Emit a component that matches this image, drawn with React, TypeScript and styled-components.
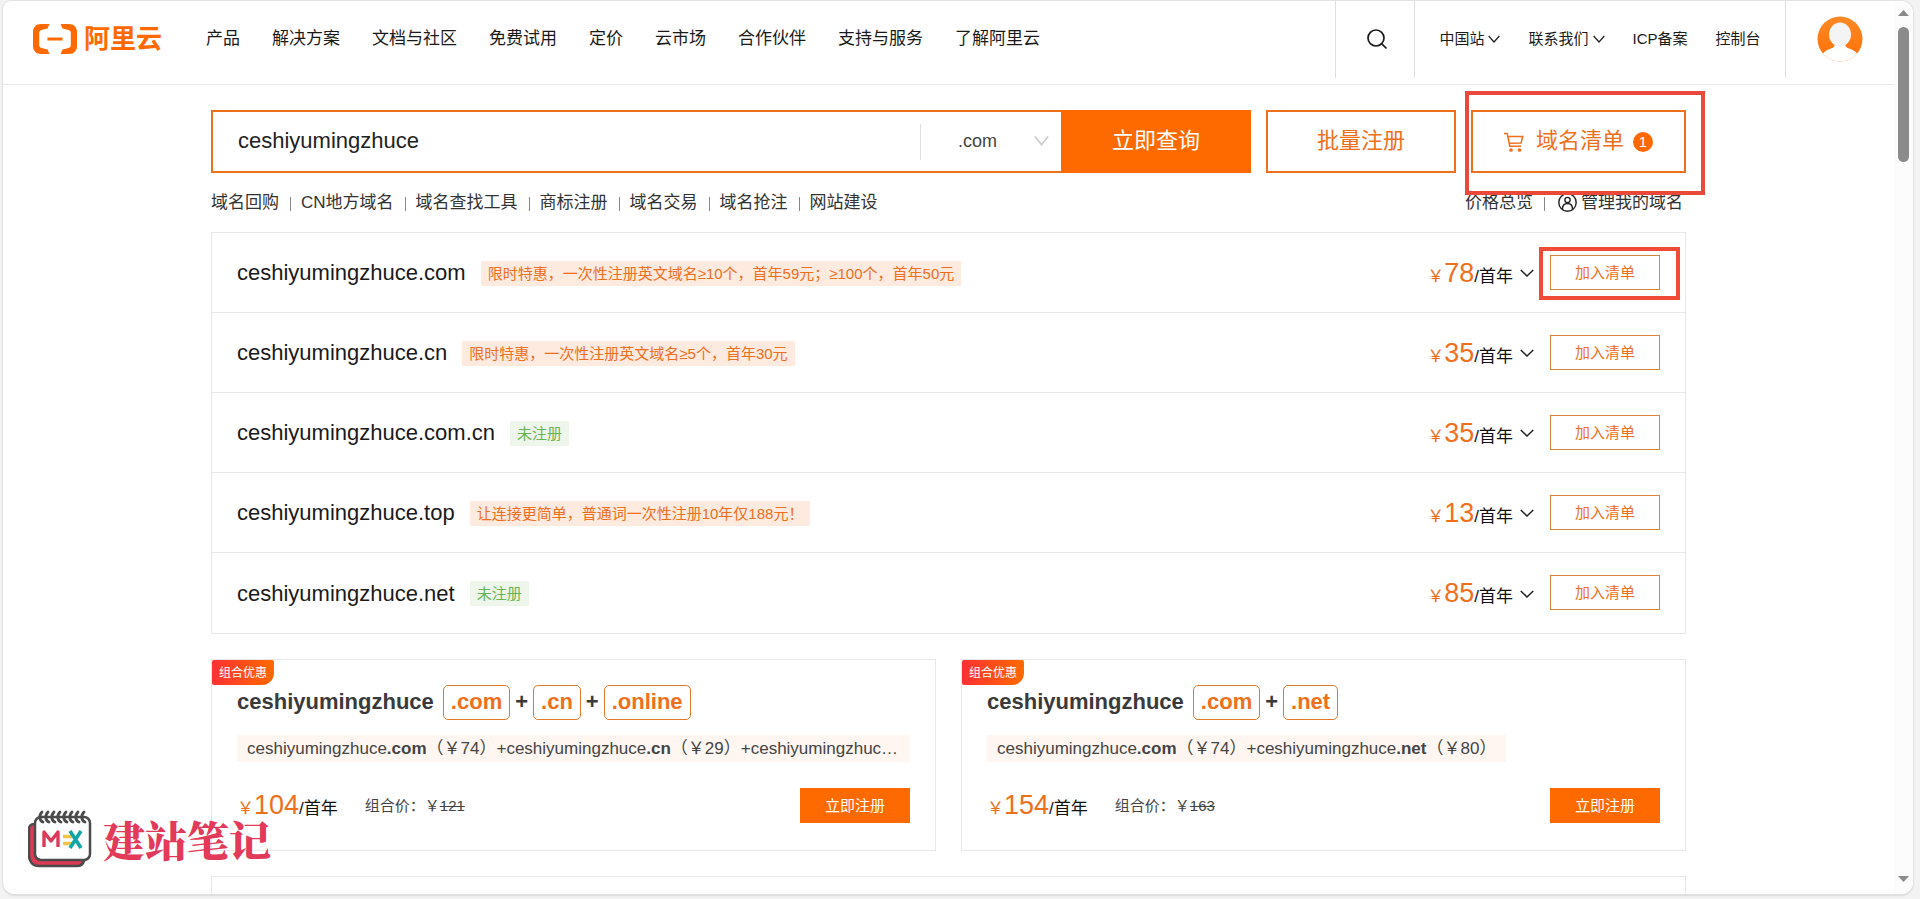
import React from 'react';
import styled, { createGlobalStyle } from 'styled-components';

const ORANGE = '#ff6a00';
const TEXT_ORANGE = '#ee6f1c';
const LINE = '#e8e8e8';

const GlobalStyle = createGlobalStyle`
  * { box-sizing: border-box; }
  body {
    margin: 0;
    background: #f3f3f3;
    color: #1a1a1a;
    font-family: "Liberation Sans", "Noto Sans CJK SC", sans-serif;
    font-size: 17px;
    line-height: 24px;
  }
  a { color: inherit; text-decoration: none; }
  button, input, select { font-family: inherit; margin: 0; }
  button { cursor: pointer; }
  svg { display: block; flex: none; }
`;

const Desktop = styled.div`
  height: 100vh;
  padding: 1px 7px 5px 3px;
  overflow: hidden;
  position: relative;
`;

const Window = styled.div`
  height: 100%;
  display: flex;
  overflow: hidden;
  background: #fff;
  border-radius: 8px 12px 12px 12px;
  box-shadow: 0 0 1px 1px #e2e2e2, 0 2px 2px #d8d8d8;
`;

const Page = styled.div`
  flex: 1;
  min-width: 0;
`;

const Scrollbar = styled.div`
  width: 19px;
  padding: 9px 4px 12px;
  display: flex;
  flex-direction: column;
  align-items: center;
  background: #fcfcfc;
`;

const Thumb = styled.div`
  width: 11px;
  height: 135px;
  margin: 11px 0 auto;
  border-radius: 6px;
  background: #8b8b8b;
`;

const Header = styled.header`
  height: 84px;
  padding-left: 29px;
  display: flex;
  align-items: flex-start;
  border-bottom: 1px solid ${LINE};
`;

const Logo = styled.a`
  display: flex;
  align-items: center;
  gap: 6px;
  height: 75px;
  width: 174px;
  color: ${ORANGE};
  font-size: 26px;
  font-weight: 700;
  white-space: nowrap;
`;

const Nav = styled.nav`
  flex: 1;
  display: flex;
  align-items: center;
  gap: 32px;
  height: 75px;
  white-space: nowrap;
`;

const HeaderCell = styled.div<{ $width: number }>`
  width: ${p => p.$width}px;
  height: 77px;
  padding-bottom: 2px;
  display: flex;
  align-items: center;
  justify-content: center;
  border-left: 1px solid #dedede;
`;

const IconButton = styled.button`
  padding: 0;
  border: 0;
  background: none;
  color: #1a1a1a;
`;

const SearchCell = styled(HeaderCell)`
  padding-left: 4px;
`;

const Tools = styled(HeaderCell)`
  gap: 28px;
  font-size: 15px;
  white-space: nowrap;
`;

const ToolLink = styled.a`
  display: flex;
  align-items: center;
  gap: 4px;
`;

const Main = styled.main`
  max-width: 1475px;
  margin: 0 auto;
  padding-top: 25px;
`;

const SearchRow = styled.div`
  display: flex;
  gap: 15px;
  height: 63px;
`;

const SearchForm = styled.form`
  flex: 1;
  display: flex;
`;

const SearchBox = styled.div`
  flex: 1;
  display: flex;
  align-items: center;
  border: 2px solid ${TEXT_ORANGE};
  border-right: 0;
`;

const SearchInput = styled.input`
  flex: 1;
  min-width: 0;
  height: 100%;
  padding: 0 25px 2px;
  border: 0;
  outline: 0;
  background: none;
  color: #222;
  font-size: 22px;
`;

const SuffixField = styled.label`
  width: 141px;
  height: 36px;
  padding: 0 12px 2px 37px;
  display: flex;
  align-items: center;
  border-left: 1px solid #dedede;
`;

const SuffixSelect = styled.select`
  flex: 1;
  padding: 0;
  border: 0;
  outline: 0;
  appearance: none;
  background: none;
  color: #444;
  font-size: 18px;
`;

const SearchButton = styled.button`
  width: 190px;
  padding: 0 0 8px;
  border: 0;
  background: ${ORANGE};
  color: #fff;
  font-size: 22px;
`;

const OutlineButton = styled.button<{ $width: number }>`
  width: ${p => p.$width}px;
  display: flex;
  align-items: center;
  justify-content: center;
  border: 2px solid ${TEXT_ORANGE};
  background: #fff;
  color: ${TEXT_ORANGE};
  font-size: 22px;
`;

const ButtonText = styled.span`
  padding-bottom: 8px;
`;

const CartIcon = styled.svg`
  margin-right: 12px;
`;

const CountBadge = styled.span`
  width: 20px;
  height: 20px;
  margin-left: 9px;
  border-radius: 50%;
  background: ${ORANGE};
  color: #fff;
  font-size: 15px;
  line-height: 20px;
`;

const Highlight = styled.div`
  position: relative;
  display: flex;
`;

const Marker = styled.span<{ $inset: string; $color: string }>`
  position: absolute;
  inset: ${p => p.$inset};
  border: 4px solid ${p => p.$color};
  pointer-events: none;
  z-index: 1;
`;

const LinkRow = styled.div`
  display: flex;
  align-items: center;
  justify-content: space-between;
  height: 59px;
  color: #333;
`;

const LinkGroup = styled.nav`
  display: flex;
  align-items: center;
  white-space: nowrap;
`;

const Separator = styled.i`
  width: 1px;
  height: 14px;
  margin: 3px 10px 0 11px;
  background: #888;
`;

const AccountLink = styled.a`
  display: flex;
  align-items: center;
  gap: 4px;
  padding: 0 3px;
`;

const ResultList = styled.ul`
  margin: 0;
  padding: 0;
  list-style: none;
  border: 1px solid ${LINE};
`;

const ResultRow = styled.li`
  height: 80px;
  padding: 1px 25px 0;
  display: flex;
  align-items: center;
  border-bottom: 1px solid ${LINE};
  &:last-child { border-bottom: 0; }
`;

const Domain = styled.span`
  font-size: 22px;
`;

const Tag = styled.span<{ $free?: boolean }>`
  height: 25px;
  margin-left: 15px;
  padding: 0 7px;
  background: ${p => (p.$free ? '#eef5eb' : '#ffeadf')};
  color: ${p => (p.$free ? '#66b453' : TEXT_ORANGE)};
  font-size: 15px;
  line-height: 25px;
  white-space: nowrap;
`;

const Price = styled.span`
  padding-top: 3px;
  color: ${TEXT_ORANGE};
  line-height: 32px;
  white-space: nowrap;
`;

const Amount = styled.strong`
  font-size: 27px;
  font-weight: 400;
`;

const Term = styled.span`
  color: #111;
`;

const RowActions = styled.div`
  margin-left: auto;
  display: flex;
  align-items: center;
  gap: 7px;
`;

const AddButton = styled.button`
  width: 110px;
  height: 35px;
  padding: 0 0 2px;
  border: 1px solid #d9843d;
  background: #fff;
  color: ${TEXT_ORANGE};
  font-size: 15px;
`;

const ActionBox = styled.div`
  position: relative;
  display: flex;
  margin: 0 0 2px 9px;
`;

const BundleGrid = styled.div`
  display: grid;
  grid-template-columns: 1fr 1fr;
  gap: 25px;
  margin: 25px 0;
`;

const Bundle = styled.section`
  position: relative;
  min-width: 0;
  padding: 25px;
  border: 1px solid ${LINE};
`;

const BundleBadge = styled.span`
  position: absolute;
  top: 0;
  left: 0;
  height: 25px;
  padding: 0 7px;
  border-radius: 2px 2px 12px 2px;
  background: linear-gradient(90deg, #ff3034, #ff6a00);
  color: #fff;
  font-size: 12px;
  line-height: 26px;
`;

const BundleTitle = styled.h2`
  margin: 0;
  display: flex;
  align-items: center;
  gap: 5px;
  color: #3a3a3a;
  font-size: 22px;
  line-height: 31px;
`;

const BundleName = styled.span`
  padding: 0 4px 2px 0;
`;

const Plus = styled.span`
  padding-bottom: 2px;
`;

const Suffix = styled.span`
  padding: 0 7px 2px;
  border: 1px solid #e07a2c;
  border-radius: 5px;
  color: ${TEXT_ORANGE};
`;

const BundleDetail = styled.p`
  width: fit-content;
  max-width: 100%;
  margin: 15px 0 24px;
  padding: 0 10px;
  overflow: hidden;
  text-overflow: ellipsis;
  white-space: nowrap;
  background: #fff6f2;
  color: #444;
  line-height: 27px;
`;

const BundleFooter = styled.div`
  display: flex;
  align-items: center;
`;

const BundlePrice = styled.span`
  margin-left: 27px;
  padding-top: 1px;
  flex: 1;
  color: #444;
  font-size: 15px;
`;

const RegisterButton = styled.button`
  width: 110px;
  height: 35px;
  border: 0;
  padding: 0 0 3px;
  background: ${ORANGE};
  color: #fff;
  font-size: 15px;
`;

const NextPanel = styled.section`
  height: 80px;
  border: 1px solid ${LINE};
`;

const Watermark = styled.div`
  position: absolute;
  left: 28px;
  bottom: 31px;
  display: flex;
  align-items: center;
  gap: 11px;
  color: #e43a5a;
  font-family: "Noto Serif CJK SC", "Noto Sans CJK SC", serif;
  font-size: 42px;
  font-weight: 900;
  line-height: 58px;
`;

const Chevron = ({ w = 12, h = 8, color = '#222' }: { w?: number; h?: number; color?: string }) => (
  <svg width={w} height={h} viewBox="0 0 13 8" fill="none" stroke={color} strokeWidth="1.4" preserveAspectRatio="none">
    <path d="M0.7 1l5.8 6 5.8-6" />
  </svg>
);

const navItems = ['产品', '解决方案', '文档与社区', '免费试用', '定价', '云市场', '合作伙伴', '支持与服务', '了解阿里云'];
const quickLinks = ['域名回购', 'CN地方域名', '域名查找工具', '商标注册', '域名交易', '域名抢注', '网站建设'];

const results = [
  { suffix: '.com', tag: '限时特惠，一次性注册英文域名≥10个，首年59元；≥100个，首年50元', price: 78 },
  { suffix: '.cn', tag: '限时特惠，一次性注册英文域名≥5个，首年30元', price: 35 },
  { suffix: '.com.cn', tag: '未注册', free: true, price: 35 },
  { suffix: '.top', tag: '让连接更简单，普通词一次性注册10年仅188元！', price: 13 },
  { suffix: '.net', tag: '未注册', free: true, price: 85 },
];

const bundles = [
  { parts: [['.com', 74], ['.cn', 29], ['.online', 18]], price: 104, total: 121 },
  { parts: [['.com', 74], ['.net', 80]], price: 154, total: 163 },
];

const name = 'ceshiyumingzhuce';

export default function App() {
  return (
    <Desktop>
      <GlobalStyle />
      <Window>
        <Page>
          <Header>
            <Logo href="#" aria-label="阿里云">
              <svg width="46" height="30" viewBox="0 0 46 30" fill={ORANGE}>
                <path d="M17.500 0H9C4 0 1 3.500 1 8v14c0 4.500 3 8 8 8h8.500l-2-4.500-6-1.500c-1.500-.4-2.300-1.300-2.300-3V9c0-1.700.8-2.600 2.300-3l6-1.500z" />
                <path d="M28.500 0H37c5 0 8 3.500 8 8v14c0 4.500-3 8-8 8h-8.500l2-4.500 6-1.500c1.500-.4 2.300-1.300 2.300-3V9c0-1.700-.8-2.600-2.300-3l-6-1.500z" />
                <path d="M15.500 13.500h15v3h-15z" />
              </svg>
              <span>阿里云</span>
            </Logo>
            <Nav>{navItems.map(item => <a href="#" key={item}>{item}</a>)}</Nav>
            <SearchCell $width={79}>
              <IconButton aria-label="搜索">
                <svg width="22" height="22" viewBox="0 0 22 22" fill="none" stroke="currentColor" strokeWidth="1.7">
                  <circle cx="10" cy="10" r="8" />
                  <path d="M15.500 15.500l5 5" />
                </svg>
              </IconButton>
            </SearchCell>
            <Tools $width={371}>
              <ToolLink href="#">中国站 <Chevron /></ToolLink>
              <ToolLink href="#">联系我们 <Chevron /></ToolLink>
              <ToolLink href="#">ICP备案</ToolLink>
              <ToolLink href="#">控制台</ToolLink>
            </Tools>
            <HeaderCell $width={109}>
              <IconButton aria-label="账号">
                <svg width="46" height="46" viewBox="0 0 46 46">
                  <defs>
                    <linearGradient id="avatarFill" x1="0" y1="0" x2="0" y2="1">
                      <stop offset="0" stopColor="#ff8a26" />
                      <stop offset="1" stopColor="#ff6f08" />
                    </linearGradient>
                    <clipPath id="avatarClip"><circle cx="23" cy="23" r="22.500" /></clipPath>
                  </defs>
                  <g clipPath="url(#avatarClip)">
                    <rect width="46" height="46" fill="url(#avatarFill)" />
                    <path d="M18 26h10c0 4 1 5.500 4 6.500 5 1.500 8 4 9 7V46H5v-6.500c1-3 4-5.500 9-7 3-1 4-2.500 4-6.500z" fill="#fff" />
                    <ellipse cx="23" cy="18.500" rx="11" ry="12" fill="#f4f4f4" />
                  </g>
                </svg>
              </IconButton>
            </HeaderCell>
          </Header>

          <Main>
            <SearchRow>
              <SearchForm onSubmit={e => e.preventDefault()}>
                <SearchBox>
                  <SearchInput aria-label="域名" defaultValue={name} />
                  <SuffixField>
                    <SuffixSelect aria-label="域名后缀" defaultValue=".com">
                      <option>.com</option>
                    </SuffixSelect>
                    <Chevron w={15} h={11} color="#ccc" />
                  </SuffixField>
                </SearchBox>
                <SearchButton type="submit">立即查询</SearchButton>
              </SearchForm>
              <OutlineButton $width={190}><ButtonText>批量注册</ButtonText></OutlineButton>
              <Highlight>
                <OutlineButton $width={215}>
                  <CartIcon width="20" height="20" viewBox="0 0 20 20" fill="none" stroke="currentColor" strokeWidth="1.5">
                    <path d="M0 1.500h3.200l2.600 12.700H17M3.800 4.500h15L17 11 5.200 11.300" />
                    <circle cx="7" cy="18" r="1.100" fill="currentColor" />
                    <circle cx="15.500" cy="18" r="1.100" fill="currentColor" />
                  </CartIcon>
                  <ButtonText>域名清单</ButtonText>
                  <CountBadge>1</CountBadge>
                </OutlineButton>
                <Marker $inset="-19px -19px -22px -6px" $color="#ea4a3c" />
              </Highlight>
            </SearchRow>

            <LinkRow>
              <LinkGroup>
                {quickLinks.map((item, i) => (
                  <React.Fragment key={item}>
                    {i > 0 && <Separator />}
                    <a href="#">{item}</a>
                  </React.Fragment>
                ))}
              </LinkGroup>
              <LinkGroup>
                <a href="#">价格总览</a>
                <Separator />
                <AccountLink href="#">
                  <svg width="19" height="19" viewBox="0 0 19 19" fill="none" stroke="#222" strokeWidth="1.4">
                    <circle cx="9.500" cy="9.500" r="8.700" />
                    <circle cx="9.500" cy="7" r="2.600" />
                    <path d="M4.500 16c0-3.500 2-5.500 5-5.500s5 2 5 5.500" />
                  </svg>
                  管理我的域名
                </AccountLink>
              </LinkGroup>
            </LinkRow>

            <ResultList>
              {results.map((r, i) => (
                <ResultRow key={r.suffix}>
                  <Domain>{name}{r.suffix}</Domain>
                  <Tag $free={r.free}>{r.tag}</Tag>
                  <RowActions>
                    <Price>￥<Amount>{r.price}</Amount><Term>/首年</Term></Price>
                    <Chevron w={14} />
                    <ActionBox>
                      <AddButton>加入清单</AddButton>
                      {i === 0 && <Marker $inset="-8px -20px -10px -11px" $color="#f04a38" />}
                    </ActionBox>
                  </RowActions>
                </ResultRow>
              ))}
            </ResultList>

            <BundleGrid>
              {bundles.map(b => (
                <Bundle key={b.price}>
                  <BundleBadge>组合优惠</BundleBadge>
                  <BundleTitle>
                    <BundleName>{name}</BundleName>
                    {b.parts.map(([s], i) => (
                      <React.Fragment key={s}>
                        {i > 0 && <Plus>+</Plus>}
                        <Suffix>{s}</Suffix>
                      </React.Fragment>
                    ))}
                  </BundleTitle>
                  <BundleDetail>
                    {b.parts.map(([s, p], i) => (
                      <React.Fragment key={s}>{i > 0 && '+'}{name}<b>{s}</b>（￥{p}）</React.Fragment>
                    ))}
                  </BundleDetail>
                  <BundleFooter>
                    <Price>￥<Amount>{b.price}</Amount><Term>/首年</Term></Price>
                    <BundlePrice>组合价：￥<s>{b.total}</s></BundlePrice>
                    <RegisterButton>立即注册</RegisterButton>
                  </BundleFooter>
                </Bundle>
              ))}
            </BundleGrid>
            <NextPanel />
          </Main>
        </Page>
        <Scrollbar>
          <svg width="11" height="6" viewBox="0 0 11 6" fill="#8b8b8b"><path d="M0 6L5.500 0 11 6z" /></svg>
          <Thumb />
          <svg width="11" height="6" viewBox="0 0 11 6" fill="#8b8b8b"><path d="M0 0L5.500 6 11 0z" /></svg>
        </Scrollbar>
      </Window>
      <Watermark>
        <svg width="64" height="58" viewBox="0 0 64 58">
          <path d="M6 14c-3 0-5 2-5 5v26c0 7 4 11 10 11h38c4 0 6-2 7-5z" fill="#dc3a55" stroke="#4b4b4b" strokeWidth="2.500" />
          <rect x="7" y="7" width="55" height="43" rx="6" fill="#fff" stroke="#4b4b4b" strokeWidth="2.500" />
          <path d="M14 2c-4 4-2 9 1 10M20 2c-4 4-2 9 1 10M26 2c-4 4-2 9 1 10M32 2c-4 4-2 9 1 10M38 2c-4 4-2 9 1 10M44 2c-4 4-2 9 1 10M50 2c-4 4-2 9 1 10M56 2c-4 4-2 9 1 10" fill="none" stroke="#4b4b4b" strokeWidth="2.800" strokeLinecap="round" />
          <path d="M16 37V22l7 9 7-9v15" fill="none" stroke="#dc3a5a" strokeWidth="3.400" strokeLinejoin="round" />
          <path d="M35 26.500h9M35 33.500h9" stroke="#f0c648" strokeWidth="3.400" />
          <path d="M42 21l11 17M53 21L42 38" stroke="#12a5a8" strokeWidth="3.600" />
        </svg>
        <span>建站笔记</span>
      </Watermark>
    </Desktop>
  );
}
